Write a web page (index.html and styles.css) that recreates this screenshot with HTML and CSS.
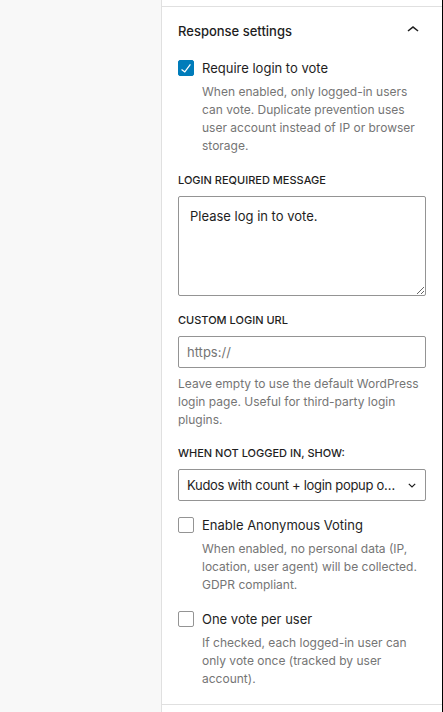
FILE: index.html
```html
<!DOCTYPE html>
<html lang="en">
<head>
  <meta charset="UTF-8">
  <meta name="viewport" content="width=device-width, initial-scale=1.0">
  <title>Response settings</title>
  <link rel="stylesheet" href="styles.css">
</head>
<body>
  <div class="layout">
    <div class="canvas"></div>

    <aside class="sidebar">
      <section class="panel">
        <h2 class="panel-title">
          <button class="panel-toggle" type="button" aria-expanded="true">
            <span>Response settings</span>
            <svg class="panel-arrow" width="24" height="24" viewBox="0 0 24 24" aria-hidden="true">
              <path d="M6.5 12.4L12 8l5.5 4.4-.9 1.2L12 10l-4.5 3.6-1-1.2z"/>
            </svg>
          </button>
        </h2>

        <div class="panel-body">
          <div class="control toggle-control">
            <label class="check-row">
              <span class="check">
                <input type="checkbox" checked>
                <svg class="check-mark" width="20" height="20" viewBox="0 0 24 24" aria-hidden="true">
                  <path d="M16.7 7.1l-6.3 8.5-3.3-2.5-.9 1.2 4.5 3.4L17.9 8z"/>
                </svg>
              </span>
              <span>Require login to vote</span>
            </label>
            <p class="help indent">When enabled, only logged-in users can vote. Duplicate prevention uses user account instead of IP or browser storage.</p>
          </div>

          <div class="control">
            <label class="field-label" for="loginMessage">Login required message</label>
            <textarea id="loginMessage" class="field textarea">Please log in to vote.</textarea>
          </div>

          <div class="control">
            <label class="field-label" for="loginUrl">Custom login URL</label>
            <input id="loginUrl" class="field input" type="text" placeholder="https://">
            <p class="help">Leave empty to use the default WordPress login page. Useful for third-party login plugins.</p>
          </div>

          <div class="control">
            <label class="field-label" for="loggedOut">When not logged in, show:</label>
            <div class="select-wrap">
              <select id="loggedOut" class="field select">
                <option>Kudos with count + login popup on click</option>
                <option>Kudos with count only</option>
                <option>Nothing</option>
              </select>
              <svg class="select-arrow" width="8" height="5" viewBox="0 0 8 5" aria-hidden="true">
                <polyline points="0.8,0.8 4,4 7.2,0.8"/>
              </svg>
            </div>
          </div>

          <div class="control toggle-control">
            <label class="check-row">
              <span class="check">
                <input type="checkbox">
              </span>
              <span>Enable Anonymous Voting</span>
            </label>
            <p class="help indent">When enabled, no personal data (IP, location, user agent) will be collected. GDPR compliant.</p>
          </div>

          <div class="control toggle-control">
            <label class="check-row">
              <span class="check">
                <input type="checkbox">
              </span>
              <span>One vote per user</span>
            </label>
            <p class="help indent">If checked, each logged-in user can only vote once (tracked by user account).</p>
          </div>
        </div>
      </section>
    </aside>
  </div>
</body>
</html>
```

FILE: styles.css
```css
body {
  margin: 0;
  background-color: #fff;
  color: #1e1e1e;
  font-family: 'Inter', 'Noto Sans', sans-serif;
  font-size: 13px;
}
.layout {
  display: flex;
  height: 712px;
  overflow: hidden;
}
.canvas {
  width: 161px;
  flex-shrink: 0;
  background-color: #f8f8f8;
}
.sidebar {
  flex: 1;
  padding-top: 6px;
  border-left: 1px solid #e0e0e0;
  border-right: 1px solid #000;
}
.panel {
  border-top: 1px solid #e0e0e0;
  border-bottom: 1px solid #e0e0e0;
}
.panel-title {
  margin: 0;
}
.panel-toggle {
  display: flex;
  align-items: center;
  justify-content: space-between;
  width: 100%;
  height: 48px;
  padding: 0 17px 0 16px;
  border: none;
  background: none;
  color: #1e1e1e;
  font-family: inherit;
  font-size: 13px;
  font-weight: 500;
  cursor: pointer;
}
.panel-arrow {
  fill: #1e1e1e;
  margin-top: -2px;
}
.panel-body {
  padding: 5px 16px 15px;
}
.control + .control {
  margin-top: 16px;
}

/* checkbox rows */
.check-row {
  display: flex;
  align-items: center;
  gap: 8px;
  height: 16px;
  line-height: 16px;
}
.check {
  position: relative;
  width: 16px;
  height: 16px;
}
.check input {
  appearance: none;
  display: block;
  width: 16px;
  height: 16px;
  margin: 0;
  border: 1px solid #949494;
  border-radius: 2px;
  background-color: #fff;
}
.check input:checked {
  background-color: #007cba;
  border-color: #007cba;
}
.check-mark {
  position: absolute;
  top: -2px;
  left: -2px;
  fill: #fff;
  pointer-events: none;
}
.help {
  margin: 7px 0 0;
  font-size: 12px;
  line-height: 18px;
  color: #757575;
}
.help.indent {
  margin-left: 24px;
}
.toggle-control {
  padding-bottom: 1px;
}

/* text fields */
.field-label {
  display: block;
  margin-bottom: 8px;
  font-size: 11px;
  font-weight: 500;
  line-height: 16px;
  text-transform: uppercase;
}
.field {
  display: block;
  width: 100%;
  box-sizing: border-box;
  margin: 0;
  border: 1px solid #949494;
  border-radius: 2px;
  background-color: #fff;
  color: #1e1e1e;
  font-family: inherit;
  font-size: 13px;
}
.textarea {
  height: 100px;
  padding: 10px 11px;
  line-height: 18px;
  resize: vertical;
}
.input {
  height: 32px;
  padding: 0 8px;
}
.input::placeholder {
  color: #757575;
}
.select-wrap {
  position: relative;
}
.select {
  appearance: none;
  height: 32px;
  padding: 0 28px 0 8px;
  overflow: hidden;
  white-space: nowrap;
  text-overflow: ellipsis;
  letter-spacing: -0.3px;
}
.select-arrow {
  position: absolute;
  top: 14px;
  right: 10px;
  fill: none;
  stroke: #1e1e1e;
  stroke-width: 1.2;
  pointer-events: none;
}
```
